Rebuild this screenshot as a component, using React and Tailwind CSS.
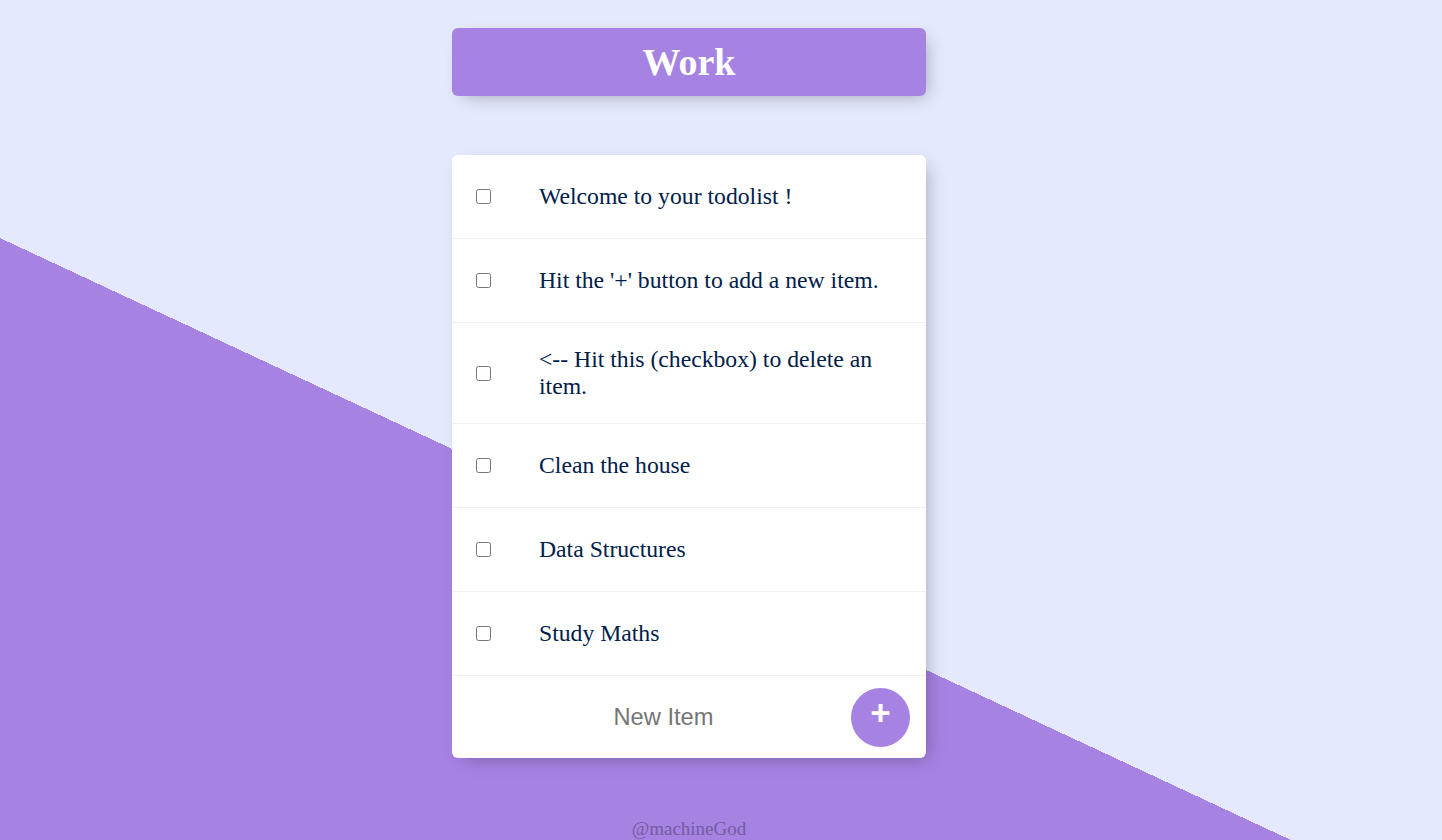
const items = [
  'Welcome to your todolist !',
  "Hit the '+' button to add a new item.",
  '<-- Hit this (checkbox) to delete an item.',
  'Clean the house',
  'Data Structures',
  'Study Maths',
];

function Item({ text }) {
  return (
    <div className="flex min-h-[84px] items-center border-b border-[#F1F1F1]">
      <input type="checkbox" className="mx-[24px] h-[15px] w-[15px] shrink-0" />
      <p className="py-[23px] px-[24px] text-[23.7px] leading-[27px] text-[#00204a]">{text}</p>
    </div>
  );
}

export default function App() {
  return (
    <div className="min-h-screen w-full bg-[linear-gradient(205deg,#E4E9FD_60.2%,#A683E3_60.2%)] font-['Liberation_Serif',serif]">
      <div className="flex flex-col items-center pr-[64px] pt-[28px]">
        {/* heading */}
        <div className="w-[474px] rounded-[6px] bg-[#A683E3] text-center shadow-[6px_6px_18px_-6px_rgba(0,0,0,0.3)]">
          <h1 className="py-[12px] text-[38px] font-bold leading-[44px] text-white">Work</h1>
        </div>

        {/* list */}
        <div className="mt-[59px] w-[474px] rounded-[6px] bg-white shadow-[6px_6px_18px_-6px_rgba(0,0,0,0.3)]">
          {items.map((t) => <Item key={t} text={t} />)}
          <form className="flex min-h-[82px] items-center pl-[24px]" onSubmit={(e) => e.preventDefault()}>
            <input
              type="text"
              placeholder="New Item"
              className="h-[71px] w-[371px] pl-[24px] pr-[20px] text-center font-['Liberation_Sans',sans-serif] text-[23.7px] text-[#00204a] outline-none placeholder:text-[#757575]"
            />
            <button
              type="submit"
              className="ml-[4px] flex h-[59px] w-[59px] items-center justify-center rounded-full bg-[#A683E3] pb-[9px] font-['Liberation_Sans',sans-serif] text-[35px] font-bold leading-none text-white"
            >
              +
            </button>
          </form>
        </div>

        <footer className="mt-[60px] text-[19px] leading-[22px] text-[#745C9F]">@machineGod</footer>
      </div>
    </div>
  );
}
